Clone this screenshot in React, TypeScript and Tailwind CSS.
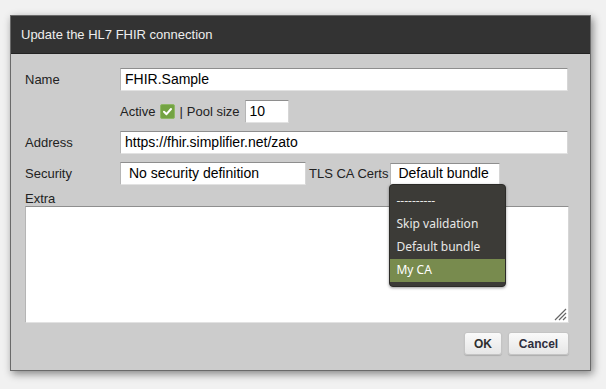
import React from "react";

const font = { fontFamily: '"Liberation Sans", Arial, sans-serif' };
const ddFont = { fontFamily: '"Noto Sans", "DejaVu Sans", sans-serif' };

function Input({ value, className = "", pad = "pl-[4px]" }: { value: string; className?: string; pad?: string }) {
  return (
    <div
      className={`h-[23px] bg-white border-t border-l border-t-[#8e8e8e] border-l-[#b5b5b5] border-b border-r border-b-[#e2e2e2] border-r-[#d6d6d6] flex items-center ${pad} text-[14px] text-black ${className}`}
    >
      {value}
    </div>
  );
}

export default function App() {
  return (
    <div className="w-[606px] h-[389px] bg-[#f1f1f1] pt-[15px] pl-[10px] overflow-hidden" style={font}>
      <div className="relative w-[581px] h-[356px] border border-[#6a6a6a] bg-[#cccccc] shadow-[2px_3px_8px_rgba(0,0,0,0.45)] flex flex-col">
        <div className="h-[38px] bg-[#333333] border-b border-[#222] flex items-center pl-[10px] text-[13px] text-[#eeeeee]">
          Update the HL7 FHIR connection
        </div>
        <div className="flex flex-col pl-[14px] pr-[22px] pt-[14px] text-[13px] text-[#222]">
          <div className="flex items-center">
            <div className="w-[95px]">Name</div>
            <Input value="FHIR.Sample" className="flex-1" />
          </div>
          <div className="flex items-center mt-[9px] pl-[95px]">
            <span>Active</span>
            <span className="ml-[5px] w-[15px] h-[15px] rounded-[2px] bg-[#73a343] border border-[#8fb866] flex items-center justify-center">
              <svg width="11" height="11" viewBox="0 0 11 11">
                <path d="M2 5.8 L4.5 8.2 L9 3" stroke="white" strokeWidth="2" fill="none" strokeLinecap="round" strokeLinejoin="round" />
              </svg>
            </span>
            <span className="ml-[4px]">|</span>
            <span className="ml-[4px]">Pool size</span>
            <Input value="10" className="ml-[5px] w-[44px]" />
          </div>
          <div className="flex items-center mt-[8px]">
            <div className="w-[95px]">Address</div>
            <Input value="https://fhir.simplifier.net/zato" className="flex-1" />
          </div>
          <div className="flex items-center mt-[8px]">
            <div className="w-[95px]">Security</div>
            <Input value="No security definition" className="w-[186px]" pad="pl-[8px]" />
            <span className="ml-[3px]">TLS CA Certs</span>
            <div className="relative ml-[2px]">
              <Input value="Default bundle" className="w-[110px] !h-[22px]" pad="pl-[7px]" />
              <div
                className="absolute left-[-1px] top-[21px] w-[117px] h-[103px] bg-[#3c3b37] rounded-[4px] border border-[#2c2b28] shadow-[0_1px_3px_rgba(0,0,0,0.4)] pt-[5px] text-[12px] text-[#e8e8e6] z-10"
                style={ddFont}
              >
                <div className="h-[23px] flex items-center pl-[6px]">----------</div>
                <div className="h-[23px] flex items-center pl-[6px]">Skip validation</div>
                <div className="h-[23px] flex items-center pl-[6px]">Default bundle</div>
                <div className="h-[23px] flex items-center pl-[6px] bg-[#788b4e] text-white">My CA</div>
              </div>
            </div>
          </div>
          <div className="mt-[7px] leading-[14px]">Extra</div>
          <div className="relative h-[117px] bg-white border-t border-l border-t-[#8e8e8e] border-l-[#b5b5b5] border-b border-r border-b-[#e2e2e2] border-r-[#d6d6d6] mr-[-1px]">
            <svg className="absolute right-[1px] bottom-[1px]" width="14" height="14" viewBox="0 0 14 14">
              <path d="M13 2 L2 13 M13 6 L6 13 M13 10 L10 13" stroke="#666" strokeWidth="1.2" />
            </svg>
          </div>
          <div className="flex justify-end mt-[9px] gap-[6px] mr-[-1px]">
            <button className="h-[23px] w-[38px] rounded-[3px] border border-[#c4c4c4] bg-gradient-to-b from-[#fafafa] to-[#e6e6e6] text-[12px] font-bold text-[#2e2e2e] shadow-[0_1px_1px_rgba(0,0,0,0.15)]">
              OK
            </button>
            <button className="h-[23px] w-[61px] rounded-[3px] border border-[#c4c4c4] bg-gradient-to-b from-[#fafafa] to-[#e6e6e6] text-[12px] font-bold text-[#2e2e3e] shadow-[0_1px_1px_rgba(0,0,0,0.15)]">
              Cancel
            </button>
          </div>
        </div>
      </div>
    </div>
  );
}
